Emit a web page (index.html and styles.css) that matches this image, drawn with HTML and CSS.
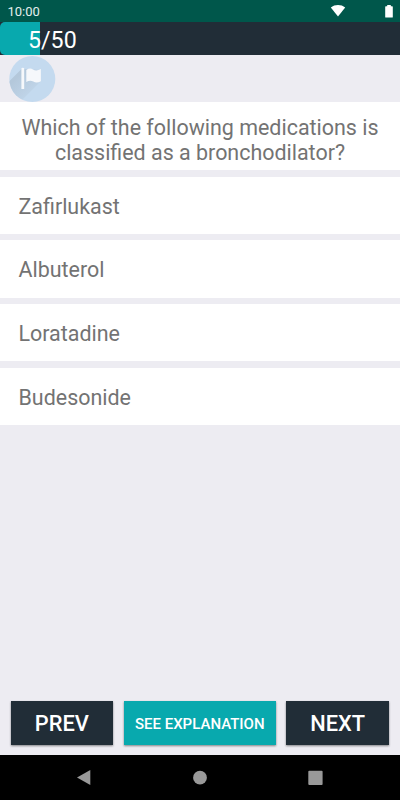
FILE: index.html
```html
<!DOCTYPE html>
<html lang="en">
<head>
<meta charset="utf-8">
<title>Quiz</title>
<link rel="stylesheet" href="styles.css">
</head>
<body>
<div class="screen">
  <header class="status">
    <span class="clock">10:00</span>
    <svg class="wifi" width="16" height="14" viewBox="0 0 16 14"><path d="M.8 3.4C4.8.1 11.2.1 15.200 3.400L8 12.400z" fill="#fff"/></svg>
    <svg class="battery" width="8" height="13" viewBox="0 0 8 13"><path d="M2.200 0h3.600v1.300h1.400q.6 0 .6.6v10q0 .6-.6.6H.8q-.6 0-.6-.6v-10q0-.6.600-.6h1.400z" fill="#fff"/></svg>
  </header>
  <div class="progress"><div class="fill"></div><span class="count">5/50</span></div>
  <div class="tools">
    <svg width="48" height="46" viewBox="0 0 48 46">
      <defs>
        <clipPath id="disc"><circle cx="24.300" cy="23" r="23"/></clipPath>
        <linearGradient id="shade" gradientUnits="userSpaceOnUse" x1="10" y1="20" x2="27" y2="37">
          <stop offset="0" stop-color="#b4c8db"/><stop offset="1" stop-color="#c1d6ea"/>
        </linearGradient>
      </defs>
      <circle cx="24.300" cy="23" r="23" fill="#c4daef"/>
      <path clip-path="url(#disc)" d="M13.500 13L-6 32.500V50H8L33 25V14z" fill="url(#shade)"/>
      <path d="M13.400 12.500q0-.8 1.400-.8t1.400.8V33h-2.800z" fill="#f6f8fb"/>
      <path d="M18.300 14q3.600-2.500 6.700-.5 3.400 2.200 7.900-.5V25.200q-4.200 2.300-7.600.3-3.300-2-7 .6z" fill="#f6f8fb"/>
    </svg>
  </div>
  <main class="quiz">
    <h1 class="question">Which of the following medications is<br>classified as a bronchodilator?</h1>
    <div class="option">Zafirlukast</div>
    <div class="option">Albuterol</div>
    <div class="option">Loratadine</div>
    <div class="option">Budesonide</div>
  </main>
  <div class="actions">
    <button class="btn">PREV</button>
    <button class="btn explain">SEE EXPLANATION</button>
    <button class="btn">NEXT</button>
  </div>
  <nav class="nav">
    <svg width="400" height="45" viewBox="0 0 400 45" fill="#999">
      <path d="M77 22.500L90.300 15v15z"/>
      <circle cx="200" cy="22.700" r="6.900"/>
      <rect x="308.300" y="15.700" width="14.300" height="14.300" rx="1"/>
    </svg>
  </nav>
</div>
</body>
</html>
```
FILE: styles.css
```css
* { box-sizing: border-box; }
body { margin: 0; font-family: Roboto, sans-serif; }
.screen {
  width: 400px;
  height: 800px;
  display: flex;
  flex-direction: column;
  background: #edecf2;
  overflow: hidden;
}
.status {
  height: 22px;
  display: flex;
  align-items: center;
  padding: 0 7px 0 7.500px;
  background: #00574b;
  color: #e4efed;
}
.clock { font-size: 13px; line-height: 22px; flex: 1; padding-top: 1px; }
.wifi { margin-right: 39px; }
.progress {
  height: 33px;
  display: grid;
  grid-template-rows: 33px;
  background: #212d37;
  margin-bottom: 1px;
}
.fill, .count { grid-area: 1 / 1; }
.fill { width: 40px; background: #08a9ae; border-radius: 5px 0 0 5px; }
.count { padding-left: 28px; font-size: 23.200px; line-height: 36px; color: #fff; }
.tools { height: 46px; padding-left: 8px; }
.tools svg { display: block; }
.quiz { flex: 1; color: #737373; font-size: 21.440px; }
.question {
  margin: 0 0 6.700px;
  height: 68px;
  padding-top: 13px;
  background: #fff;
  font: inherit;
  line-height: 25px;
  text-align: center;
}
.option {
  height: 57.200px;
  margin-bottom: 6.500px;
  padding-left: 18.500px;
  line-height: 60px;
  background: #fff;
}
.actions { display: flex; gap: 10.500px; padding: 0 11px 10px 10.500px; }
.btn {
  flex: 1;
  height: 44.500px;
  padding: 2px 0 0;
  border: 0;
  font: 500 21.800px Roboto, sans-serif;
  color: #fff;
  background: #212d37;
  box-shadow: 0 1px 2px rgba(0, 0, 0, .45);
}
.explain { flex: 0 0 152px; font-size: 15px; background: #08a9ae; }
.nav { height: 45px; background: #000; }
.nav svg { display: block; }
```
